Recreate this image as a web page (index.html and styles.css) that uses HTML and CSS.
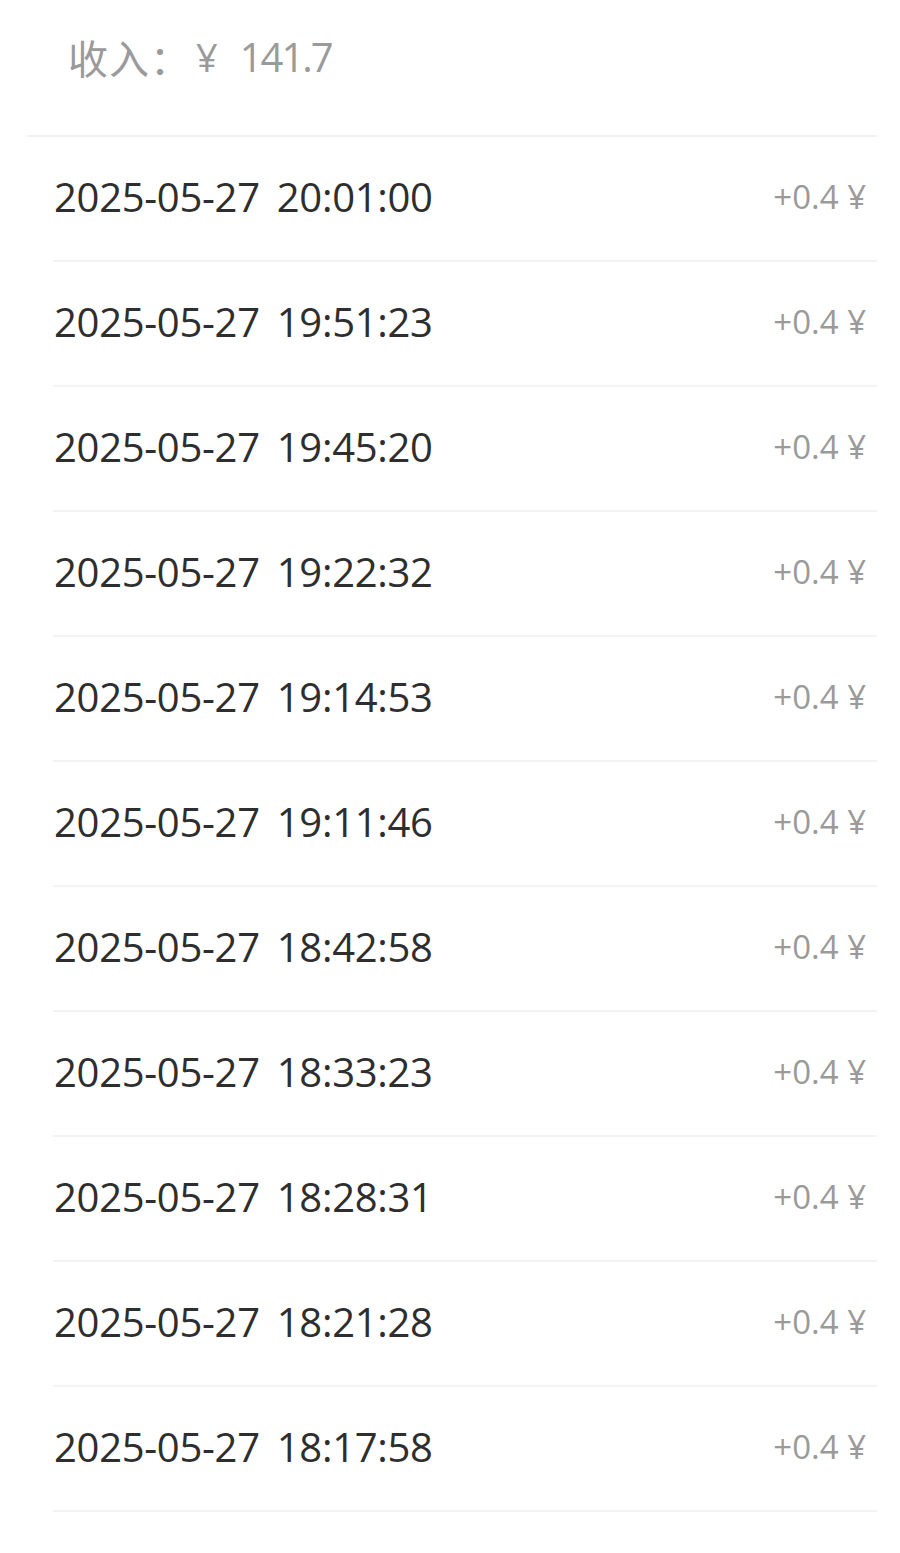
FILE: index.html
```html
<!DOCTYPE html>
<html lang="zh">
<head>
<meta charset="utf-8">
<title>收入明细</title>
<link rel="stylesheet" href="styles.css">
</head>
<body>
<div class="page">
  <div class="header">
    <span class="label">收入：</span><span class="currency">¥</span><span class="total">141.7</span>
  </div>
  <ul class="list">
    <li class="row"><span class="time">2025-05-27 20:01:00</span><span class="amount">+0.4 ¥</span></li>
    <li class="row"><span class="time">2025-05-27 19:51:23</span><span class="amount">+0.4 ¥</span></li>
    <li class="row"><span class="time">2025-05-27 19:45:20</span><span class="amount">+0.4 ¥</span></li>
    <li class="row"><span class="time">2025-05-27 19:22:32</span><span class="amount">+0.4 ¥</span></li>
    <li class="row"><span class="time">2025-05-27 19:14:53</span><span class="amount">+0.4 ¥</span></li>
    <li class="row"><span class="time">2025-05-27 19:11:46</span><span class="amount">+0.4 ¥</span></li>
    <li class="row"><span class="time">2025-05-27 18:42:58</span><span class="amount">+0.4 ¥</span></li>
    <li class="row"><span class="time">2025-05-27 18:33:23</span><span class="amount">+0.4 ¥</span></li>
    <li class="row"><span class="time">2025-05-27 18:28:31</span><span class="amount">+0.4 ¥</span></li>
    <li class="row"><span class="time">2025-05-27 18:21:28</span><span class="amount">+0.4 ¥</span></li>
    <li class="row"><span class="time">2025-05-27 18:17:58</span><span class="amount">+0.4 ¥</span></li>
  </ul>
</div>
</body>
</html>
```
FILE: styles.css
```css
* { box-sizing: border-box; }
html, body {
  margin: 0;
  padding: 0;
  background: #ffffff;
}
body {
  font-family: "Open Sans", "Noto Sans CJK SC", sans-serif;
  color: #333333;
}
.page {
  width: 900px;
}
.header {
  display: flex;
  align-items: center;
  height: 137px;
  margin: 0 23px 0 27px;
  padding: 0 0 22px 41px;
  border-bottom: 2px solid #f2f2f2;
  color: #9a9a9a;
  line-height: 46px;
}
.label {
  font-family: "Noto Sans CJK SC", sans-serif;
  font-size: 40px;
  letter-spacing: 1px;
}
.currency {
  font-size: 38px;
  margin: 0 22px 0 5px;
}
.total {
  font-size: 40px;
  letter-spacing: -2px;
}
.list {
  list-style: none;
  margin: 0 23px 0 53px;
  padding: 0;
}
.row {
  display: flex;
  justify-content: space-between;
  align-items: center;
  height: 125px;
  padding: 0 11px 5px 1px;
  border-bottom: 2px solid #f3f3f3;
}
.time {
  font-size: 40px;
  color: #2e2e2e;
  letter-spacing: -0.3px;
  word-spacing: 7px;
}
.amount {
  font-size: 33px;
  color: #9a9a9a;
}
```
